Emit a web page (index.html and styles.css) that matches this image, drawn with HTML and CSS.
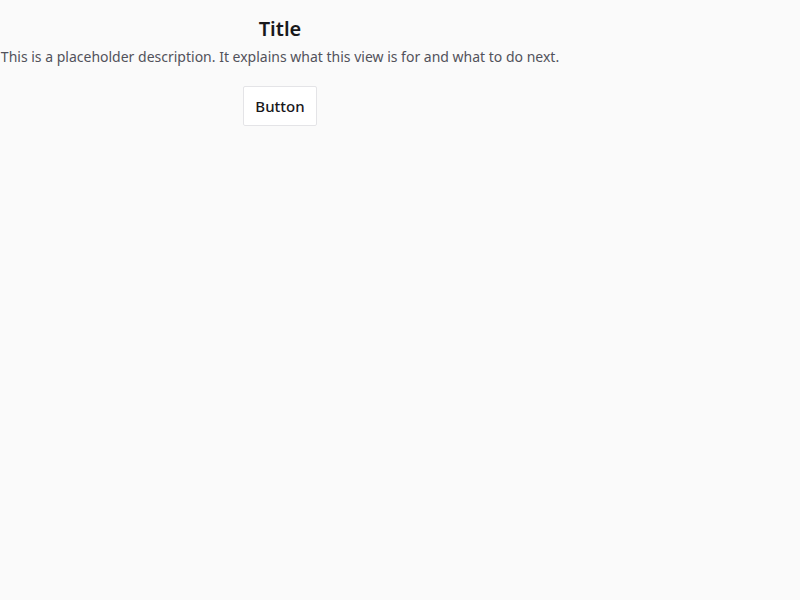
FILE: index.html
```html
<!DOCTYPE html>
<html>
<head>
<meta charset="utf-8">
<link rel="stylesheet" href="styles.css">
</head>
<body>
<main class="view">
  <h1 class="title">Title</h1>
  <p class="desc">This is a placeholder description. It explains what this view is for and what to do next.</p>
  <button class="btn">Button</button>
</main>
</body>
</html>
```
FILE: styles.css
```css
html, body {
  margin: 0;
  background: #fafafa;
}
body {
  font-family: "Noto Sans", "Liberation Sans", sans-serif;
}
.view {
  width: 560px;
  padding-top: 15px;
  display: flex;
  flex-direction: column;
  align-items: center;
  text-align: center;
}
.title {
  margin: 0;
  font-size: 20px;
  line-height: 28px;
  font-weight: 600;
  color: #18181b;
}
.desc {
  margin: 4px 0 0;
  font-size: 14px;
  line-height: 20px;
  color: #52525b;
  white-space: nowrap;
}
.btn {
  margin-top: 19px;
  height: 40px;
  padding: 0 11px;
  background: #ffffff;
  border: 1px solid #e4e4e7;
  border-radius: 2px;
  font-family: inherit;
  font-size: 15px;
  font-weight: 500;
  color: #18181b;
}
```
